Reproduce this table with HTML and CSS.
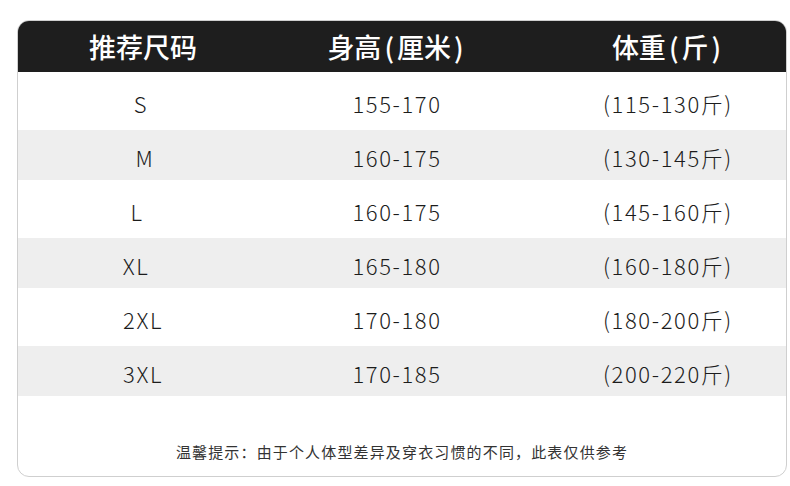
FILE: index.html
```html
<!DOCTYPE html>
<html lang="zh-CN">
<head>
<meta charset="utf-8">
<title>尺码表</title>
<link rel="stylesheet" href="styles.css">
</head>
<body>
<div class="card">
  <div class="row head">
    <div class="c c1">推荐尺码</div>
    <div class="c c2">身高<span class="p">(</span>厘米<span class="p">)</span></div>
    <div class="c c3">体重<span class="p">(</span>斤<span class="p">)</span></div>
  </div>
  <div class="row tall">
    <div class="c c1 r-s">S</div>
    <div class="c c2">155-170</div>
    <div class="c c3">(115-130斤)</div>
  </div>
  <div class="row short gray">
    <div class="c c1 r-m">M</div>
    <div class="c c2">160-175</div>
    <div class="c c3">(130-145斤)</div>
  </div>
  <div class="row tall">
    <div class="c c1 r-l">L</div>
    <div class="c c2">160-175</div>
    <div class="c c3">(145-160斤)</div>
  </div>
  <div class="row short gray">
    <div class="c c1 r-xl">XL</div>
    <div class="c c2">165-180</div>
    <div class="c c3">(160-180斤)</div>
  </div>
  <div class="row tall">
    <div class="c c1">2XL</div>
    <div class="c c2">170-180</div>
    <div class="c c3">(180-200斤)</div>
  </div>
  <div class="row short gray">
    <div class="c c1">3XL</div>
    <div class="c c2">170-185</div>
    <div class="c c3">(200-220斤)</div>
  </div>
  <div class="note">温馨提示：由于个人体型差异及穿衣习惯的不同，此表仅供参考</div>
</div>
</body>
</html>
```

FILE: styles.css
```css
html, body {
  margin: 0;
  padding: 0;
  background: #ffffff;
}

body {
  font-family: "Noto Sans CJK SC", "Noto Sans", sans-serif;
  color: #1c1c1c;
  padding: 20px 0 0 17px;
}

.card {
  width: 768px;
  height: 455px;
  border: 1px solid #cfcfcf;
  border-radius: 12px;
  overflow: hidden;
  display: flex;
  flex-direction: column;
  background: #fff;
}

.row {
  display: grid;
  grid-template-columns: 250px 258px 260px;
  align-items: center;
  box-sizing: border-box;
}

.row.head {
  height: 52px;
  background: #1e1e1e;
  color: #ffffff;
  font-size: 27px;
  font-weight: 500;
  margin: -1px -1px 0 -1px;
  padding: 1px 1px 0 1px;
}

.p {
  margin: 0 3px;
}

.row.tall,
.row.short {
  font-size: 22px;
  font-weight: 300;
  letter-spacing: 1.6px;
  padding-top: 3px;
}

.row.tall {
  height: 58px;
}

.row.short {
  height: 50px;
}

.row.gray {
  background: #eeeeee;
}

.c {
  text-align: center;
  line-height: 1;
}

.c3 {
  padding-left: 24px;
}

.r-s {
  padding-right: 4px;
}

.r-m {
  padding-left: 4px;
}

.r-l {
  padding-right: 12px;
}

.r-xl {
  padding-right: 14px;
}

.note {
  flex: 1;
  display: flex;
  align-items: center;
  justify-content: center;
  padding-top: 30px;
  font-size: 15px;
  letter-spacing: 1.15px;
  color: #333333;
}
```
